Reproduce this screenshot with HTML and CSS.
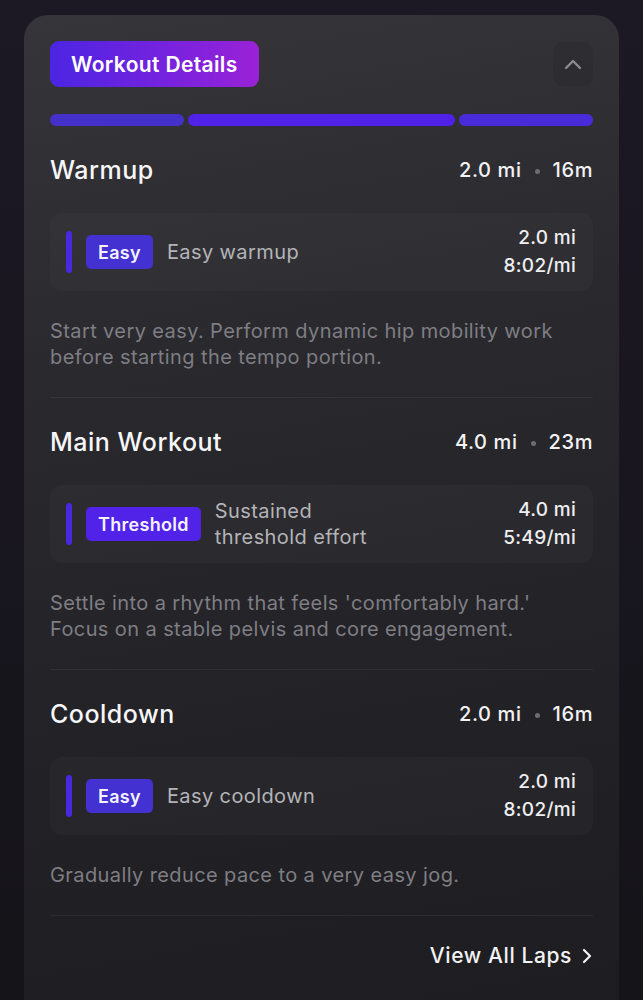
FILE: index.html
```html
<!DOCTYPE html>
<html>
<head>
<meta charset="utf-8">
<link rel="stylesheet" href="styles.css">
</head>
<body>
<div class="card">
  <div class="header">
    <div class="title-badge">Workout Details</div>
    <button class="collapse" aria-label="Collapse">
      <svg width="18" height="12" viewBox="0 0 18 12"><path d="M2 10 L9 3 L16 10" fill="none" stroke="#8a8a8f" stroke-width="2.4" stroke-linecap="round" stroke-linejoin="round"/></svg>
    </button>
  </div>
  <div class="progress">
    <div class="seg seg-a" style="flex: 2"></div>
    <div class="seg seg-b" style="flex: 4"></div>
    <div class="seg seg-c" style="flex: 2"></div>
  </div>

  <section class="phase">
    <div class="phase-head">
      <h2>Warmup</h2>
      <div class="phase-meta">2.0 mi<span class="dot"></span>16m</div>
    </div>
    <div class="step">
      <div class="step-bar"></div>
      <span class="zone zone-easy">Easy</span>
      <span class="step-name">Easy warmup</span>
      <div class="step-vals"><div>2.0 mi</div><div>8:02/mi</div></div>
    </div>
    <p class="note">Start very easy. Perform dynamic hip mobility work before starting the tempo portion.</p>
  </section>

  <section class="phase">
    <div class="phase-head">
      <h2>Main Workout</h2>
      <div class="phase-meta">4.0 mi<span class="dot"></span>23m</div>
    </div>
    <div class="step">
      <div class="step-bar bar-threshold"></div>
      <span class="zone zone-threshold">Threshold</span>
      <span class="step-name">Sustained threshold effort</span>
      <div class="step-vals"><div>4.0 mi</div><div>5:49/mi</div></div>
    </div>
    <p class="note">Settle into a rhythm that feels 'comfortably hard.' Focus on a stable pelvis and core engagement.</p>
  </section>

  <section class="phase">
    <div class="phase-head">
      <h2>Cooldown</h2>
      <div class="phase-meta">2.0 mi<span class="dot"></span>16m</div>
    </div>
    <div class="step">
      <div class="step-bar"></div>
      <span class="zone zone-easy">Easy</span>
      <span class="step-name">Easy cooldown</span>
      <div class="step-vals"><div>2.0 mi</div><div>8:02/mi</div></div>
    </div>
    <p class="note">Gradually reduce pace to a very easy jog.</p>
  </section>

  <div class="footer">
    <a class="laps">View All Laps
      <svg width="12" height="18" viewBox="0 0 12 18"><path d="M3 3 L9 9 L3 15" fill="none" stroke="#f2f2f4" stroke-width="2.2" stroke-linecap="round" stroke-linejoin="round"/></svg>
    </a>
  </div>
</div>
</body>
</html>
```

FILE: styles.css
```css
* { box-sizing: border-box; }
html, body { margin: 0; }
body {
  background: linear-gradient(180deg, #1c1824 0%, #151419 100%);
  font-family: Inter, "Noto Sans", "Liberation Sans", sans-serif;
  color: #f2f2f4;
  height: 1000px;
  overflow: hidden;
}
.card {
  margin: 15px 24px 0;
  padding: 26px 26px 40px;
  border-radius: 24px;
  background: linear-gradient(170deg, #36353a 0%, #2a292e 30%, #222125 65%, #1c1c1f 100%);
  min-height: 1100px;
}
.header {
  display: flex;
  justify-content: space-between;
  align-items: center;
}
.title-badge {
  height: 46px;
  padding: 0 21px;
  display: flex;
  align-items: center;
  border-radius: 9px;
  background: linear-gradient(90deg, #4b25e3 0%, #7a22dd 60%, #9a22d6 100%);
  font-size: 21px;
  font-weight: 600;
  color: #fff;
  letter-spacing: 0.35px;
}
.collapse {
  width: 40px;
  height: 44px;
  border: none;
  border-radius: 10px;
  background: rgba(0, 0, 0, 0.08);
  display: flex;
  align-items: center;
  justify-content: center;
  padding: 0;
}
.progress {
  display: flex;
  gap: 4px;
  margin-top: 27px;
  height: 12px;
}
.seg { border-radius: 6px; height: 12px; }
.seg-a { background: #4530c9; }
.seg-b { background: #5021e6; }
.seg-c { background: #4a2bd9; }

.phase {
  padding: 30px 0 27px;
  border-bottom: 1px solid rgba(255, 255, 255, 0.06);
}
.phase-head {
  display: flex;
  justify-content: space-between;
  align-items: center;
  height: 28px;
}
.phase-head h2 {
  margin: 0;
  font-size: 25px;
  font-weight: 500;
  letter-spacing: 0.5px;
  color: #f6f6f8;
}
.phase-meta {
  font-size: 20px;
  font-weight: 500;
  letter-spacing: 0.6px;
  display: flex;
  align-items: center;
  color: #f2f2f4;
}
.dot {
  width: 5px;
  height: 5px;
  border-radius: 50%;
  background: #6c6c72;
  margin: 2px 13px 0;
}
.step {
  margin-top: 29px;
  height: 78px;
  padding: 0 17px 0 16px;
  border-radius: 12px;
  background: rgba(255, 255, 255, 0.025);
  display: flex;
  align-items: center;
}
.step-bar {
  width: 6px;
  height: 42px;
  border-radius: 3px;
  background: #4a28df;
  margin-right: 14px;
}
.zone {
  height: 34px;
  padding: 0 12px;
  border-radius: 5px;
  display: flex;
  align-items: center;
  font-size: 18px;
  font-weight: 600;
  letter-spacing: 0.3px;
  color: #f4f2ff;
  margin-right: 14px;
}
.zone-easy { background: #4331d2; }
.zone-threshold { background: #5122e8; }
.step-name {
  font-size: 20px;
  letter-spacing: 0.4px;
  color: #b4b4b8;
  line-height: 26px;
  max-width: 172px;
}
.step-vals {
  margin-left: auto;
  text-align: right;
  font-size: 19px;
  font-weight: 500;
  letter-spacing: 0.3px;
  line-height: 28px;
  color: #eeeef0;
}
.note {
  margin: 27px 0 0;
  max-width: 520px;
  font-size: 20px;
  letter-spacing: 0.4px;
  line-height: 26px;
  color: #7e7e84;
}
.footer {
  display: flex;
  justify-content: flex-end;
  padding-top: 26px;
}
.laps {
  display: flex;
  align-items: center;
  gap: 9px;
  font-size: 21px;
  letter-spacing: 0.6px;
  line-height: 28px;
  font-weight: 500;
  color: #f2f2f4;
}
```
